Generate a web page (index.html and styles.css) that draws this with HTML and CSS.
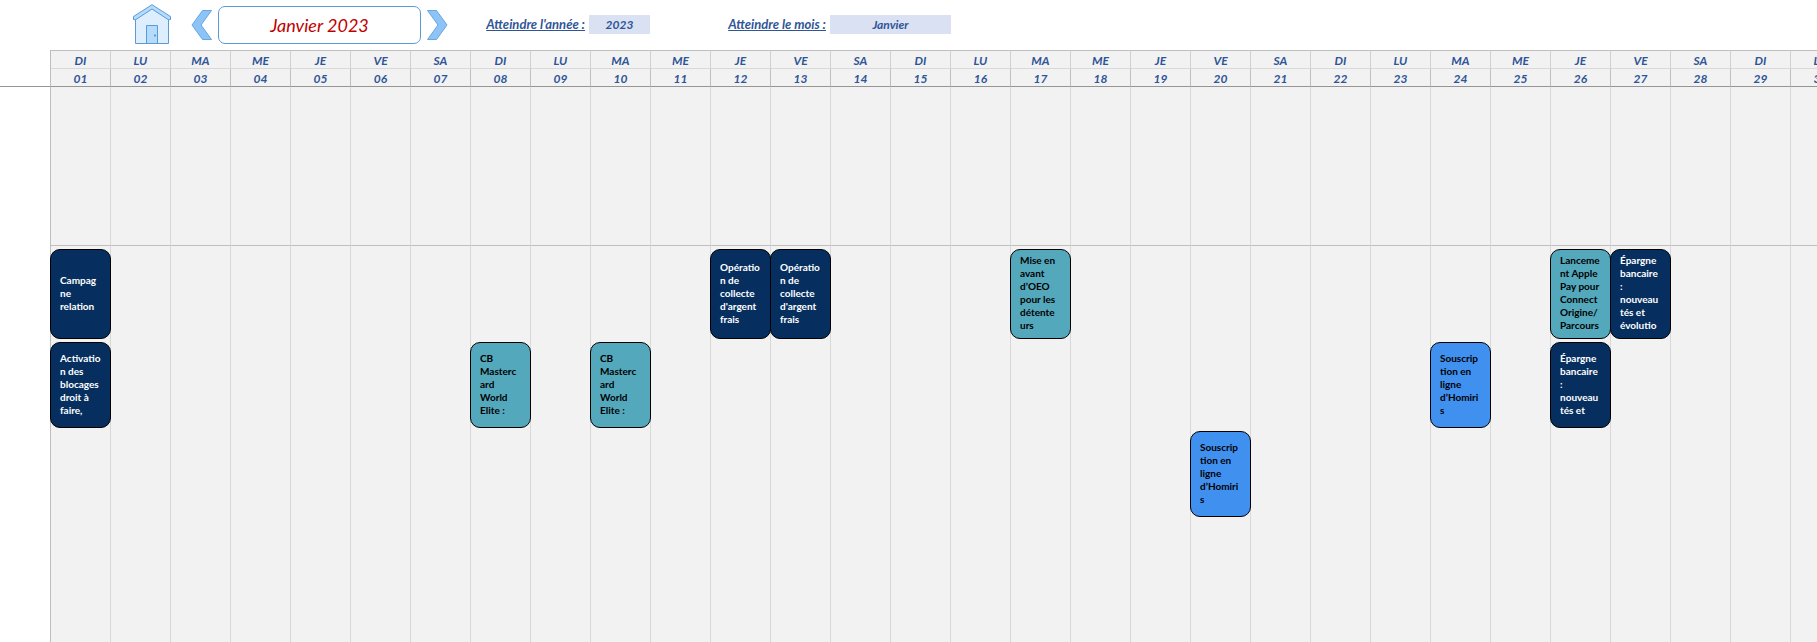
FILE: index.html
```
<!DOCTYPE html>
<html lang="fr">
<head>
<meta charset="utf-8">
<title>Calendrier – Janvier 2023</title>
<link rel="stylesheet" href="styles.css">
</head>
<body>
<header class="toolbar">
  <a class="home" href="#accueil" aria-label="Accueil">
    <svg width="38" height="41" viewBox="0 0 38 41">
      <path d="M2.500 14V39.500H35.500V14L19 4Z" fill="#ddeeff" stroke="#5b9bd5"/>
      <path d="M.5 12.500 19 .7 37.500 12.500V15.500L35.500 15.800 19 5 2.500 15.800.5 15.500Z" fill="#b4dafc" stroke="#5b9bd5"/>
      <path d="M13.500 39.500V21.500H24.500V39.500Z" fill="#b4dafc" stroke="#5b9bd5"/>
      <circle cx="22" cy="31.500" r="1" fill="#4a8fd0"/>
    </svg>
  </a>
  <div class="month-nav">
    <button class="arrow" type="button" aria-label="Mois précédent">
      <svg width="22" height="32" viewBox="0 0 22 32"><path d="M11.500 1.500H20.500L10 16 20.500 30.500H11.500L1 16Z" fill="#8cc4f8" stroke="#69a5de"/></svg>
    </button>
    <h1 class="month">Janvier 2023</h1>
    <button class="arrow" type="button" aria-label="Mois suivant">
      <svg width="22" height="32" viewBox="0 0 22 32"><path d="M10.500 1.500H1.500L12 16 1.500 30.500H10.500L21 16Z" fill="#8cc4f8" stroke="#69a5de"/></svg>
    </button>
  </div>
  <div class="field">
    <label for="year">Atteindre l'année :</label>
    <select id="year" class="year"><option>2023</option></select>
  </div>
  <div class="field">
    <label for="month">Atteindre le mois :</label>
    <select id="month" class="month-select"><option>Janvier</option></select>
  </div>
</header>
<main class="calendar">
  <table>
    <colgroup><col class="gutter-col"><col span="31" class="day-col"></colgroup>
    <thead>
      <tr class="names"><td></td><th>DI</th><th>LU</th><th>MA</th><th>ME</th><th>JE</th><th>VE</th><th>SA</th><th>DI</th><th>LU</th><th>MA</th><th>ME</th><th>JE</th><th>VE</th><th>SA</th><th>DI</th><th>LU</th><th>MA</th><th>ME</th><th>JE</th><th>VE</th><th>SA</th><th>DI</th><th>LU</th><th>MA</th><th>ME</th><th>JE</th><th>VE</th><th>SA</th><th>DI</th><th>LU</th><th>MA</th></tr>
      <tr class="numbers"><td></td><th>01</th><th>02</th><th>03</th><th>04</th><th>05</th><th>06</th><th>07</th><th>08</th><th>09</th><th>10</th><th>11</th><th>12</th><th>13</th><th>14</th><th>15</th><th>16</th><th>17</th><th>18</th><th>19</th><th>20</th><th>21</th><th>22</th><th>23</th><th>24</th><th>25</th><th>26</th><th>27</th><th>28</th><th>29</th><th>30</th><th>31</th></tr>
    </thead>
    <tbody>
      <tr class="blank"><td></td><td></td><td></td><td></td><td></td><td></td><td></td><td></td><td></td><td></td><td></td><td></td><td></td><td></td><td></td><td></td><td></td><td></td><td></td><td></td><td></td><td></td><td></td><td></td><td></td><td></td><td></td><td></td><td></td><td></td><td></td><td></td></tr>
      <tr class="lane tall">
        <td></td>
        <td><div class="event navy">Campag<br>ne<br>relation</div></td>
        <td></td><td></td><td></td><td></td><td></td><td></td><td></td><td></td><td></td><td></td>
        <td><div class="event navy">Opératio<br>n de<br>collecte<br>d'argent<br>frais</div></td>
        <td><div class="event navy">Opératio<br>n de<br>collecte<br>d'argent<br>frais</div></td>
        <td></td><td></td><td></td>
        <td><div class="event teal">Mise en<br>avant<br>d’OEO<br>pour les<br>détente<br>urs</div></td>
        <td></td><td></td><td></td><td></td><td></td><td></td><td></td><td></td>
        <td><div class="event teal">Lanceme<br>nt Apple<br>Pay pour<br>Connect<br>Origine/<br>Parcours</div></td>
        <td><div class="event navy">Épargne<br>bancaire<br>:<br>nouveau<br>tés et<br>évolutio</div></td>
        <td></td><td></td><td></td><td></td>
      </tr>
      <tr class="lane">
        <td></td>
        <td><div class="event navy">Activatio<br>n des<br>blocages<br>droit à<br>faire,</div></td>
        <td></td><td></td><td></td><td></td><td></td><td></td>
        <td><div class="event teal">CB<br>Masterc<br>ard<br>World<br>Elite :</div></td>
        <td></td>
        <td><div class="event teal">CB<br>Masterc<br>ard<br>World<br>Elite :</div></td>
        <td></td><td></td><td></td><td></td><td></td><td></td><td></td><td></td><td></td><td></td><td></td><td></td><td></td>
        <td><div class="event blue">Souscrip<br>tion en<br>ligne<br>d’Homiri<br>s</div></td>
        <td></td>
        <td><div class="event navy">Épargne<br>bancaire<br>:<br>nouveau<br>tés et</div></td>
        <td></td><td></td><td></td><td></td><td></td>
      </tr>
      <tr class="lane last">
        <td></td>
        <td></td><td></td><td></td><td></td><td></td><td></td><td></td><td></td><td></td><td></td><td></td><td></td><td></td><td></td><td></td><td></td><td></td><td></td><td></td>
        <td><div class="event blue">Souscrip<br>tion en<br>ligne<br>d’Homiri<br>s</div></td>
        <td></td><td></td><td></td><td></td><td></td><td></td><td></td><td></td><td></td><td></td><td></td>
      </tr>
    </tbody>
  </table>
</main>
</body>
</html>
```
FILE: styles.css
```
* { box-sizing: border-box; }

body {
  margin: 0;
  height: 100vh;
  display: flex;
  flex-direction: column;
  overflow: hidden;
  background: #fff;
  color: #2f5597;
  font-family: Lato, "Open Sans", sans-serif;
}

/* Toolbar */
.toolbar {
  display: flex;
  align-items: center;
  flex: none;
  height: 50px;
  padding-left: 133px;
  padding-bottom: 2px;
}
.toolbar svg { display: block; }
.home { margin-right: 20px; }
.month-nav { display: flex; align-items: center; gap: 5px; margin-right: 37px; padding-top: 2px; }
.arrow { padding: 0; border: 0; background: none; cursor: pointer; }
.month {
  width: 203px;
  height: 38px;
  margin: 0;
  border: 1px solid #5b9bd5;
  border-radius: 7px;
  color: #c00000;
  font-size: 18px;
  font-weight: 400;
  font-style: italic;
  line-height: 36px;
  text-align: center;
}
.field {
  display: flex;
  align-items: center;
  gap: 4px;
  margin-right: 76px;
  font-size: 13px;
  font-weight: 700;
  font-style: italic;
}
.field label {
  min-width: 100px;
  text-align: right;
  text-decoration: underline;
  white-space: nowrap;
}
.field select {
  appearance: none;
  height: 19px;
  padding: 0;
  border: 0;
  border-radius: 0;
  background: #d9e1f2;
  color: inherit;
  font: inherit;
  font-size: 12px;
  text-align: center;
  text-align-last: center;
}
.year { width: 61px; }
.month-select { width: 121px; }

/* Calendar grid */
.calendar { flex: 1; min-height: 0; overflow: auto; scrollbar-width: none; }
table {
  width: 1911px;
  height: 100%;
  table-layout: fixed;
  border-collapse: separate;
  border-spacing: 0;
}
.gutter-col { width: 51px; }
.day-col { width: 60px; }
th, td {
  padding: 0;
  border: 0 solid #d9d9d9;
  border-right-width: 1px;
  background: #f2f2f2;
  vertical-align: top;
}
tr > td:first-child { background: #fff; border-right-color: #bfbfbf; }
th {
  padding-top: 2px;
  font-size: 12px;
  font-style: italic;
  line-height: 15px;
}
.names > * { height: 19px; border-bottom-width: 1px; }
.names th { border-top: 1px solid #bfbfbf; border-right-color: #d0d0d0; }
.names td { border-bottom-width: 0; }
.numbers > * { height: 18px; border-bottom: 1px solid #959595; border-right-color: #bfbfbf; }
.blank td { height: 159px; }
.blank td + td { border-bottom: 1px solid #bfbfbf; }

/* Events */
.lane td { height: 89px; padding-top: 3px; }
.tall td { height: 93px; }
.lane.last td { height: auto; }
.event {
  position: relative;
  display: grid;
  align-content: center;
  height: 86px;
  margin: 0 -1px;
  padding: 0 0 2px 9px;
  border: 1px solid #000;
  border-radius: 10px;
  font-size: 10px;
  font-weight: 700;
  line-height: 13px;
  white-space: nowrap;
}
.tall .event { height: 90px; }
.navy { background: #062f5f; color: #fff; }
.teal { background: #54a8bc; color: #000; }
.blue { background: #4090f0; color: #000; }
```
